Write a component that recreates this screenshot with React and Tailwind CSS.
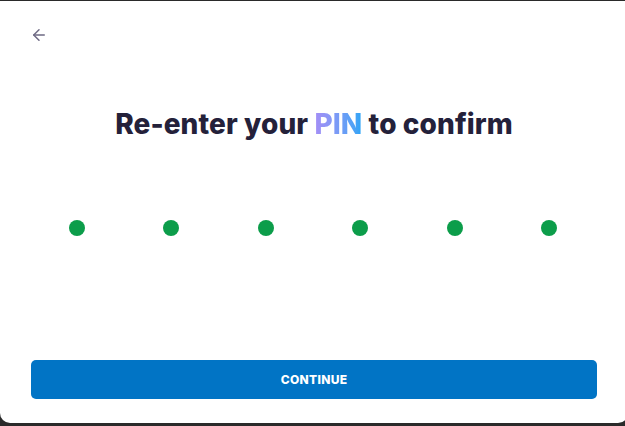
import { ArrowLeft } from "lucide-react";

const pinDots = [0, 1, 2, 3, 4, 5];

export default function App() {
  return (
    <div className="w-[625px] h-[426px] bg-[#2a2a2a] overflow-hidden flex flex-col" style={{ fontFamily: "Inter, 'Noto Sans', sans-serif" }}>
      <div className="mt-px w-[628px] h-[422px] bg-white rounded-b-[10px] flex flex-col">
        {/* back */}
        <div className="pl-[30px] pt-[25px] h-[60px]">
          <ArrowLeft className="w-[18px] h-[18px] text-[#6e6a84]" strokeWidth={2} />
        </div>

        <h1 className="mt-[46px] text-center text-[28px] leading-[34px] font-extrabold text-[#24213a] tracking-[0.1px]">
          Re-enter your{" "}
          <span className="bg-gradient-to-r from-[#a48ef6] to-[#27a5f6] bg-clip-text text-transparent">PIN</span>{" "}
          to confirm
        </h1>

        {/* dots */}
        <div className="mt-[79px] mx-[69px] w-[488px] flex justify-between">
          {pinDots.map((i) => (
            <span key={i} className="w-4 h-4 rounded-full bg-[#0c9d4a]" />
          ))}
        </div>

        <div className="mt-auto px-[31px] pb-[24px] pr-[31px]">
          <button className="w-[566px] h-[39px] rounded-[5px] bg-[#0174c5] text-white text-[12px] font-extrabold tracking-[0.3px]">
            CONTINUE
          </button>
        </div>
      </div>
    </div>
  );
}
